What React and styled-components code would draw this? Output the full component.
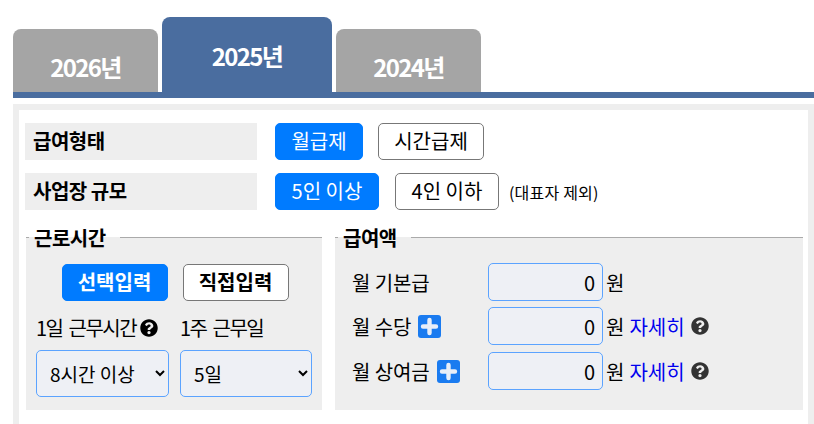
import React from "react";
import styled, { createGlobalStyle } from "styled-components";

const Global = createGlobalStyle`
  html, body {
    margin: 0;
    background: #fff;
    overflow: hidden;
    font-family: "Noto Sans CJK KR", "Noto Sans", sans-serif;
  }
`;

const Page = styled.div`
  width: 814px;
  height: 424px;
  padding: 17px 0 0 13px;
  box-sizing: border-box;
  overflow: hidden;
`;

const Tabs = styled.div`
  display: flex;
  align-items: flex-end;
  gap: 4px;
  height: 75px;
`;

const Tab = styled.div`
  width: ${(p) => (p.$active ? 170 : 145)}px;
  height: ${(p) => (p.$active ? 75 : 63)}px;
  box-sizing: border-box;
  padding-top: ${(p) => (p.$active ? 21 : 20)}px;
  background: ${(p) => (p.$active ? "#4a6d9f" : "#a5a5a5")};
  border-radius: 8px 8px 0 0;
  color: #fff;
  font-size: 24px;
  line-height: 36px;
  font-weight: 700;
  letter-spacing: -1.6px;
  text-align: center;
`;

const Bar = styled.div`
  height: 6px;
  background: #4a6d9f;
`;

const Panel = styled.div`
  margin-top: 6px;
  border: 6px solid #eee;
  border-bottom: 0;
  padding: 13px 6px 0;
  height: 320px;
  box-sizing: border-box;
`;

const Row = styled.div`
  display: flex;
  align-items: center;
  height: 37px;
  margin-bottom: 13px;
  &:nth-child(2) { margin-bottom: 12px; }
`;

const RowLabel = styled.div`
  width: 232px;
  height: 37px;
  box-sizing: border-box;
  padding-left: 8px;
  margin-right: 18px;
  background: #eee;
  font-size: 20px;
  line-height: 36px;
  font-weight: 700;
  letter-spacing: -0.5px;
  color: #000;
`;

const Choice = styled.div`
  height: 37px;
  box-sizing: border-box;
  width: ${(p) => p.$w}px;
  margin-right: ${(p) => p.$mr ?? 15}px;
  border-radius: 5px;
  border: 1px solid ${(p) => (p.$on ? "#007bff" : "#777")};
  background: ${(p) => (p.$on ? "#007bff" : "#fff")};
  color: ${(p) => (p.$on ? "#fff" : "#000")};
  font-size: 20px;
  line-height: 34px;
  font-weight: ${(p) => (p.$bold ? 700 : 400)};
  text-align: center;
`;

const Note = styled.span`
  font-size: 16px;
  color: #000;
  letter-spacing: 0.2px;
  margin-left: -5px;
`;

const Columns = styled.div`
  display: grid;
  grid-template-columns: 296px 468px;
  gap: 13px;
  margin-left: 1px;
`;

const Group = styled.fieldset`
  margin: 0;
  padding: 0 0 0 10px;
  min-width: 0;
  height: 188px;
  box-sizing: border-box;
  border: 0;
  border-top: 1px solid #aaa;
  background: #eee;
`;

const Legend = styled.legend`
  margin-left: -7px;
  padding: 2px 14px 0 5px;
  font-size: 20px;
  line-height: 28px;
  font-weight: 700;
  letter-spacing: -0.5px;
  color: #000;
`;

const ChoiceRow = styled.div`
  display: flex;
  justify-content: center;
  margin: 12px 0 0 -8px;
  & > div:last-child { margin-right: 0; }
`;

const Fields = styled.div`
  display: grid;
  grid-template-columns: 133px 132px;
  column-gap: 11px;
  margin-top: 13px;
`;

const FieldLabel = styled.div`
  display: flex;
  align-items: center;
  gap: 4px;
  height: 28px;
  font-size: 20px;
  line-height: 28px;
  letter-spacing: -1.5px;
  word-spacing: 3px;
  color: #000;
  white-space: nowrap;
`;

const Select = styled.select`
  appearance: auto;
  height: 47px;
  width: 100%;
  margin-top: 8px;
  padding: 0 0 0 9px;
  box-sizing: border-box;
  border: 1px solid #5ba3ff;
  border-radius: 5px;
  background: #eef0f5;
  font-family: inherit;
  font-size: 19px;
  color: #000;
`;

const PayRow = styled.div`
  display: flex;
  align-items: center;
  height: 38px;
  margin-bottom: 6px;
  font-size: 20px;
  color: #000;
  &:first-of-type { margin-top: 11px; }
  &:last-of-type { margin-top: 7px; }
`;

const PayLabel = styled.div`
  display: flex;
  align-items: center;
  gap: 7px;
  width: 143px;
  padding-left: 7px;
  box-sizing: border-box;
  letter-spacing: -0.1px;
  white-space: nowrap;
`;

const Amount = styled.input`
  width: 115px;
  height: 38px;
  box-sizing: border-box;
  padding: 0 7px 0 0;
  margin-right: 3px;
  border: 1px solid #5ba3ff;
  border-radius: 5px;
  background: #eef0f5;
  font-family: inherit;
  font-size: 20px;
  text-align: right;
  color: #000;
`;

const More = styled.a`
  color: #0000ee;
  margin: 0 6px 0 5px;
`;

const Help = ({ size = 18, color = "#000" }) => (
  <svg width={size} height={size} viewBox="0 0 512 512" fill={color}>
    <path d="M504 256c0 137-111 248-248 248S8 393 8 256 119 8 256 8s248 111 248 248zM262.7 90c-54.5 0-89.3 23-116.5 63.8-3.5 5.3-2.4 12.4 2.7 16.3l34.7 26.3c5.2 3.9 12.6 3 16.7-2.1 17.9-22.7 30.1-35.8 57.3-35.8 20.4 0 45.7 13.1 45.7 33 0 15-12.4 22.7-32.6 34-23.6 13.2-54.8 29.7-54.8 70.9V302c0 6.6 5.4 12 12 12h56c6.6 0 12-5.4 12-12v-1.3c0-28.6 83.4-29.8 83.4-107.1C379.3 135.4 319 90 262.7 90zM256 339c-25.4 0-46 20.6-46 46s20.6 46 46 46 46-20.6 46-46-20.6-46-46-46z" />
  </svg>
);

const PlusBox = () => (
  <svg width="23" height="23" viewBox="0 0 23 23">
    <rect width="23" height="23" rx="3" fill="#1a7bf0" />
    <path d="M11.5 5v13M5 11.5h13" stroke="#e8eef8" strokeWidth="4.4" strokeLinecap="round" />
  </svg>
);

const App = () => (
  <Page>
    <Global />
    <Tabs>
      <Tab>2026년</Tab>
      <Tab $active>2025년</Tab>
      <Tab>2024년</Tab>
    </Tabs>
    <Bar />
    <Panel>
      <Row>
        <RowLabel>급여형태</RowLabel>
        <Choice $on $w={88}>월급제</Choice>
        <Choice $w={106}>시간급제</Choice>
      </Row>
      <Row>
        <RowLabel>사업장 규모</RowLabel>
        <Choice $on $w={104} $mr={16}>5인 이상</Choice>
        <Choice $w={104}>4인 이하</Choice>
        <Note>(대표자 제외)</Note>
      </Row>
      <Columns>
        <Group>
          <Legend>근로시간</Legend>
          <ChoiceRow>
            <Choice $on $bold $w={106}>선택입력</Choice>
            <Choice $bold $w={106}>직접입력</Choice>
          </ChoiceRow>
          <Fields>
            <FieldLabel>1일 근무시간 <Help /></FieldLabel>
            <FieldLabel>1주 근무일</FieldLabel>
            <Select defaultValue="8"><option value="8">8시간 이상</option></Select>
            <Select defaultValue="5"><option value="5">5일</option></Select>
          </Fields>
        </Group>
        <Group>
          <Legend>급여액</Legend>
          <PayRow>
            <PayLabel>월 기본급</PayLabel>
            <Amount readOnly value="0" /> 원
          </PayRow>
          <PayRow>
            <PayLabel>월 수당 <PlusBox /></PayLabel>
            <Amount readOnly value="0" /> 원
            <More>자세히</More>
            <Help color="#333" />
          </PayRow>
          <PayRow>
            <PayLabel>월 상여금 <PlusBox /></PayLabel>
            <Amount readOnly value="0" /> 원
            <More>자세히</More>
            <Help color="#333" />
          </PayRow>
        </Group>
      </Columns>
    </Panel>
  </Page>
);

export default App;
